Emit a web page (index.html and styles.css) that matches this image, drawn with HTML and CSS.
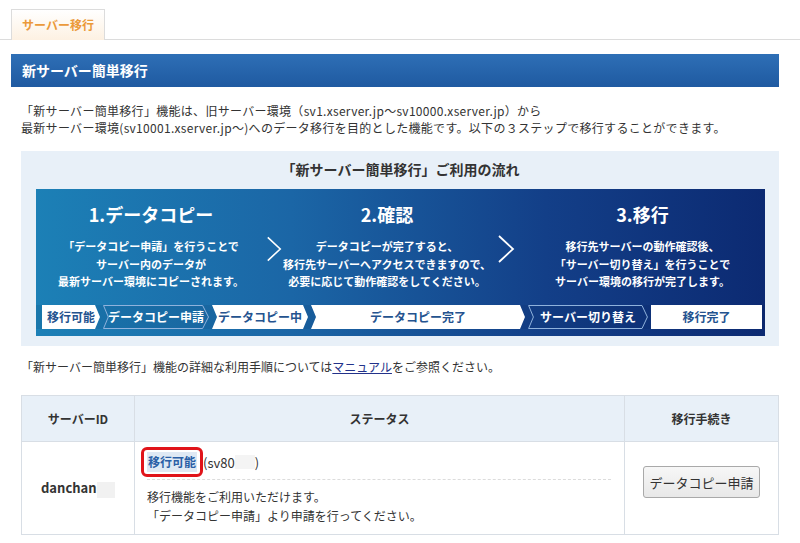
FILE: index.html
```html
<!DOCTYPE html>
<html lang="ja">
<head>
    <meta charset="UTF-8">
    <meta name="viewport" content="width=device-width, initial-scale=1.0">
    <title>サーバー移行</title>
    <link rel="stylesheet" href="styles.css">
</head>
<body>
    <div class="tabs">
        <div class="tab">サーバー移行</div>
    </div>

    <div class="content">
        <h1 class="page-title">新サーバー簡単移行</h1>

        <div class="inner">
            <p class="lead">
                「新サーバー簡単移行」機能は、旧サーバー環境（sv1.xserver.jp～sv10000.xserver.jp）から<br>
                最新サーバー環境(sv10001.xserver.jp～)へのデータ移行を目的とした機能です。以下の３ステップで移行することができます。
            </p>

            <div class="flow">
                <div class="flow-title">「新サーバー簡単移行」ご利用の流れ</div>
                <div class="banner">
                    <div class="steps">
                        <div class="step">
                            <div class="step-name">1.データコピー</div>
                            <div class="step-text">「データコピー申請」を行うことで<br>サーバー内のデータが<br>最新サーバー環境にコピーされます。</div>
                        </div>
                        <div class="chev">
                            <svg width="18" height="28" viewBox="0 0 18 28"><polyline points="2,1 16,14 2,27" fill="none" stroke="#fff" stroke-width="1.8"/></svg>
                        </div>
                        <div class="step">
                            <div class="step-name">2.確認</div>
                            <div class="step-text">データコピーが完了すると、<br>移行先サーバーへアクセスできますので、<br>必要に応じて動作確認をしてください。</div>
                        </div>
                        <div class="chev">
                            <svg width="18" height="28" viewBox="0 0 18 28"><polyline points="2,1 16,14 2,27" fill="none" stroke="#fff" stroke-width="1.8"/></svg>
                        </div>
                        <div class="step">
                            <div class="step-name">3.移行</div>
                            <div class="step-text">移行先サーバーの動作確認後、<br>「サーバー切り替え」を行うことで<br>サーバー環境の移行が完了します。</div>
                        </div>
                    </div>
                    <div class="status-bar">
                        <div class="pill first p1">移行可能</div>
                        <div class="pill line p2">データコピー申請
                            <svg class="pill-edge" viewBox="0 0 100 24" preserveAspectRatio="none"><polygon points="0.5,0.5 94,0.5 99.5,12 94,23.5 0.5,23.5 5,12" fill="none" stroke="#8fb2dc" stroke-width="1" vector-effect="non-scaling-stroke"/></svg>
                        </div>
                        <div class="pill p3">データコピー中</div>
                        <div class="pill p4">データコピー完了</div>
                        <div class="pill line p5">サーバー切り替え
                            <svg class="pill-edge" viewBox="0 0 100 24" preserveAspectRatio="none"><polygon points="0.5,0.5 95,0.5 99.5,12 95,23.5 0.5,23.5 4.5,12" fill="none" stroke="#8fb2dc" stroke-width="1" vector-effect="non-scaling-stroke"/></svg>
                        </div>
                        <div class="pill last p6">移行完了</div>
                    </div>
                </div>
            </div>

            <p class="note">「新サーバー簡単移行」機能の詳細な利用手順については<a href="#">マニュアル</a>をご参照ください。</p>

            <table class="server-table">
                <thead>
                    <tr>
                        <th class="col-id">サーバーID</th>
                        <th class="col-status">ステータス</th>
                        <th class="col-action">移行手続き</th>
                    </tr>
                </thead>
                <tbody>
                    <tr>
                        <td class="server-id">danchan<span class="blur"></span></td>
                        <td class="status-cell">
                            <div class="status-line"><span class="status-mark"><span class="status-label">移行可能</span></span>(sv80<span class="blur small"></span>)</div>
                            <div class="status-desc">移行機能をご利用いただけます。<br>「データコピー申請」より申請を行ってください。</div>
                        </td>
                        <td class="action-cell"><button class="btn">データコピー申請</button></td>
                    </tr>
                </tbody>
            </table>
        </div>
    </div>
</body>
</html>
```

FILE: styles.css
```css
body {
    margin: 0;
    font-family: "Noto Sans CJK JP", "Noto Sans", sans-serif;
    font-size: 12px;
    color: #333;
    background: #fff;
}
.tabs {
    padding: 9px 0 0 11px;
    border-bottom: 1px solid #dcdcdc;
    display: flex;
}
.tab {
    width: 92px;
    height: 30px;
    line-height: 30px;
    text-align: center;
    border: 1px solid #dcdcdc;
    border-bottom: none;
    background: linear-gradient(#fff, #fdf1e2);
    color: #eb9a3a;
    font-weight: bold;
    font-size: 12px;
    margin-bottom: -1px;
}
.content {
    margin: 14px 21px 0 11px;
}
.page-title {
    margin: 0;
    height: 33px;
    line-height: 33px;
    padding-left: 11px;
    font-size: 14px;
    color: #fff;
    background: linear-gradient(#2e6fb6, #1f5aa1);
}
.inner {
    padding-left: 10px;
}
.lead {
    margin: 15px 0 0;
    line-height: 17px;
    letter-spacing: 0.3px;
}
.flow {
    margin-top: 15px;
    background: #e8f0f8;
    padding: 8px 14px 10px 15px;
}
.flow-title {
    text-align: center;
    font-weight: bold;
    font-size: 14px;
    line-height: 20px;
    color: #333;
    margin-bottom: 10px;
}
.banner {
    background: linear-gradient(90deg, #1c80b6 0%, #1b66a6 35%, #133f88 70%, #0c2a72 100%);
    padding-bottom: 7px;
}
.steps {
    display: grid;
    grid-template-columns: 230px 16px 210px 28px 1fr;
    align-items: start;
    padding-top: 13px;
    height: 103px;
    color: #fff;
}
.step {
    text-align: center;
}
.step-name {
    font-size: 18px;
    font-weight: bold;
    line-height: 24px;
}
.step-text {
    margin-top: 12px;
    font-size: 11px;
    font-weight: bold;
    line-height: 17.5px;
    white-space: nowrap;
}
.chev {
    display: flex;
    justify-content: center;
    padding-top: 33px;
}
.status-bar {
    display: flex;
    gap: 3px;
    padding: 0 3px 0 6px;
    height: 24px;
    background: rgba(0, 10, 50, 0.08);
}
.pill {
    position: relative;
    height: 24px;
    line-height: 24px;
    font-size: 12px;
    font-weight: bold;
    text-align: center;
    white-space: nowrap;
    color: #24538f;
    background: #fff;
    clip-path: polygon(0 0, calc(100% - 5px) 0, 100% 50%, calc(100% - 5px) 100%, 0 100%, 5px 50%);
}
.pill.first {
    clip-path: polygon(0 0, calc(100% - 5px) 0, 100% 50%, calc(100% - 5px) 100%, 0 100%);
}
.pill.last {
    clip-path: none;
}
.pill.line {
    background: transparent;
    color: #fff;
    clip-path: none;
}
.pill-edge {
    position: absolute;
    left: 0;
    top: 0;
    width: 100%;
    height: 100%;
}
.p1 { width: 58px; }
.p2 { width: 106px; }
.p3 { width: 96px; }
.p4 { width: 214px; }
.p5 { width: 120px; }
.p6 { flex: 1; }
.note {
    margin: 12px 0 0;
    line-height: 17px;
}
.note a {
    color: #23328a;
}
.server-table {
    margin-top: 20px;
    width: 100%;
    border-collapse: collapse;
}
.server-table th,
.server-table td {
    border: 1px solid #d8dee5;
}
.server-table th {
    height: 43px;
    background: #e8f0f8;
    font-weight: bold;
    font-size: 12px;
    color: #333;
}
.col-id { width: 110px; }
.col-action { width: 151px; }
.server-id {
    padding-left: 19px;
    font-weight: bold;
    font-size: 13px;
    vertical-align: middle;
}
.blur {
    display: inline-block;
    width: 18px;
    height: 16px;
    background: #f1f1f1;
    vertical-align: middle;
}
.blur.small {
    width: 20px;
    height: 14px;
    background: #f4f4f4;
}
.status-cell {
    padding: 5px 13px 9px 7px;
    vertical-align: top;
}
.status-line {
    display: flex;
    align-items: center;
    height: 30px;
    font-size: 13px;
    padding-bottom: 2px;
    border-bottom: 1px dashed #dcdcdc;
    margin-left: 5px;
}
.status-mark {
    display: inline-block;
    margin-left: -6px;
    padding: 2px 3px;
    border: 3px solid #e0141a;
    border-radius: 6px;
}
.status-label {
    display: block;
    padding: 1px 1px;
    background: #dfe9f4;
    color: #2a5fa6;
    font-weight: bold;
    font-size: 12px;
    line-height: 18px;
}
.status-desc {
    padding: 7px 0 0 5px;
    line-height: 19px;
}
.action-cell {
    text-align: center;
    vertical-align: top;
    padding-top: 24px;
}
.btn {
    width: 117px;
    height: 32px;
    padding: 0;
    white-space: nowrap;
    font-family: "Noto Sans CJK JP", sans-serif;
    font-size: 13px;
    color: #333;
    border: 1px solid #a9a9a9;
    border-radius: 3px;
    background: linear-gradient(#f7f7f7, #e8e8e8);
}
```
